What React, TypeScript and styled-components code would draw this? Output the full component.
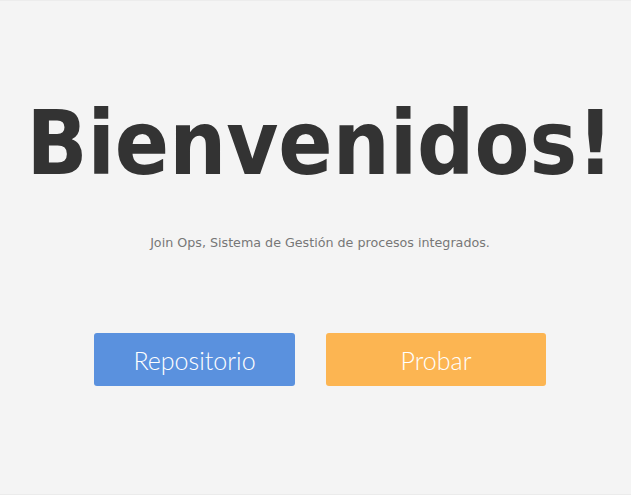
import React from "react";
import styled, { createGlobalStyle } from "styled-components";

const Global = createGlobalStyle`
  html, body { margin: 0; padding: 0; background: #ffffff; }
  body { font-family: "DejaVu Sans", sans-serif; }
`;

const Page = styled.main`
  box-sizing: border-box;
  height: 495px;
  background: #f4f4f4;
  border-top: 1px solid #ececec;
  border-bottom: 1px solid #ebebeb;
  display: flex;
  flex-direction: column;
  align-items: center;
  padding-left: 9px;
`;

const Title = styled.h1`
  margin: 90px 0 0;
  font-family: "DejaVu Sans Condensed", "DejaVu Sans", sans-serif;
  font-stretch: condensed;
  font-weight: 700;
  font-size: 89px;
  line-height: 104px;
  color: #333333;
  letter-spacing: 0;
`;

const Subtitle = styled.p`
  margin: 40px 0 0;
  font-family: "DejaVu Sans", sans-serif;
  font-size: 12.7px;
  line-height: 16px;
  color: #777777;
`;

const Actions = styled.div`
  display: flex;
  gap: 31px;
  margin-top: 82px;
`;

const Button = styled.button<{ $tone: "blue" | "orange"; $w: number }>`
  width: ${(p) => p.$w}px;
  height: 53px;
  border: none;
  border-radius: 3px;
  background: ${(p) => (p.$tone === "blue" ? "#5a91de" : "#fcb552")};
  color: #ffffff;
  font-family: "Lato", sans-serif;
  font-weight: 300;
  font-size: 25px;
  cursor: pointer;
  padding: 0;
`;

export default function App() {
  return (
    <>
      <Global />
      <Page>
        <Title>Bienvenidos!</Title>
        <Subtitle>Join Ops, Sistema de Gestión de procesos integrados.</Subtitle>
        <Actions>
          <Button $tone="blue" $w={201}>Repositorio</Button>
          <Button $tone="orange" $w={220}>Probar</Button>
        </Actions>
      </Page>
    </>
  );
}
